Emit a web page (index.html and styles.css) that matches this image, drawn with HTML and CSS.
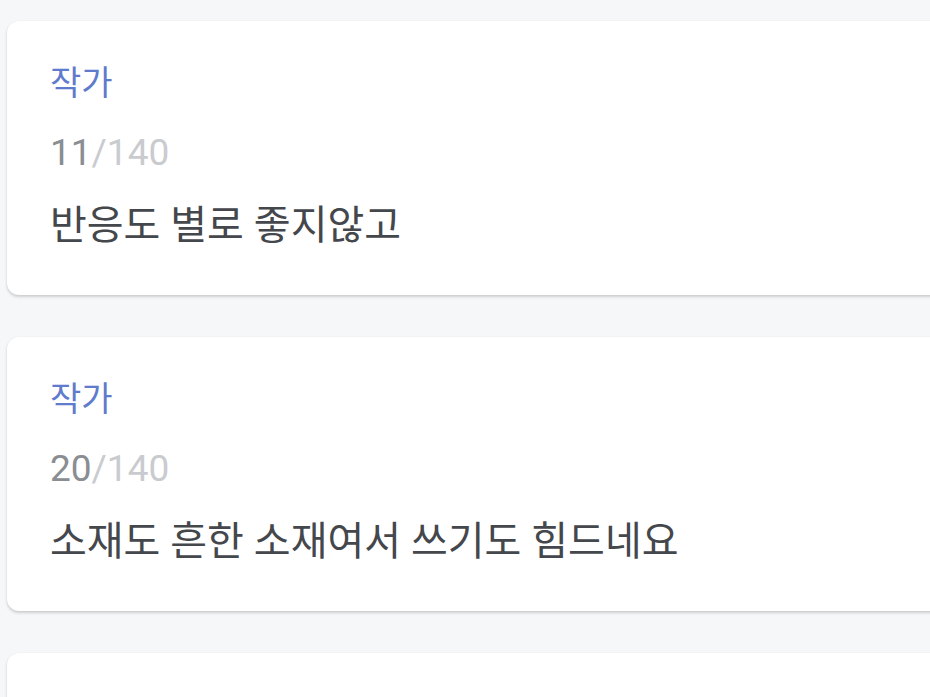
FILE: index.html
```html
<!DOCTYPE html>
<html lang="ko">
<head>
<meta charset="utf-8">
<link rel="stylesheet" href="styles.css">
</head>
<body>
<main class="list">
  <section class="card">
    <div class="label">작가</div>
    <div class="count"><span class="cur">11</span><span class="max">/140</span></div>
    <div class="text">반응도 별로 좋지않고</div>
  </section>
  <section class="card">
    <div class="label">작가</div>
    <div class="count"><span class="cur">20</span><span class="max">/140</span></div>
    <div class="text">소재도 흔한 소재여서 쓰기도 힘드네요</div>
  </section>
  <section class="card"></section>
</main>
</body>
</html>
```
FILE: styles.css
```css
html, body {
  margin: 0;
  padding: 0;
  background: #f6f7f9;
  overflow: hidden;
}
.list {
  display: flex;
  flex-direction: column;
  gap: 42px;
  padding: 21px 0 0 7px;
  width: 960px;
}
.card {
  background: #ffffff;
  border-radius: 12px;
  box-shadow: 0 2px 3px rgba(0, 0, 0, 0.16), 0 0 2px rgba(0, 0, 0, 0.06);
  height: 274px;
  flex-shrink: 0;
  box-sizing: border-box;
  padding: 42px 0 0 43px;
  display: flex;
  flex-direction: column;
  font-family: Roboto, "Noto Sans CJK KR", sans-serif;
}
.label {
  font-size: 34px;
  line-height: 40px;
  color: #5f7bcc;
}
.count {
  margin-top: 30px;
  font-size: 37px;
  line-height: 40px;
}
.cur { color: #8a8d91; }
.max { color: #c9cbce; }
.text {
  margin-top: 29px;
  font-size: 40px;
  line-height: 48px;
  color: #44474b;
}
```
